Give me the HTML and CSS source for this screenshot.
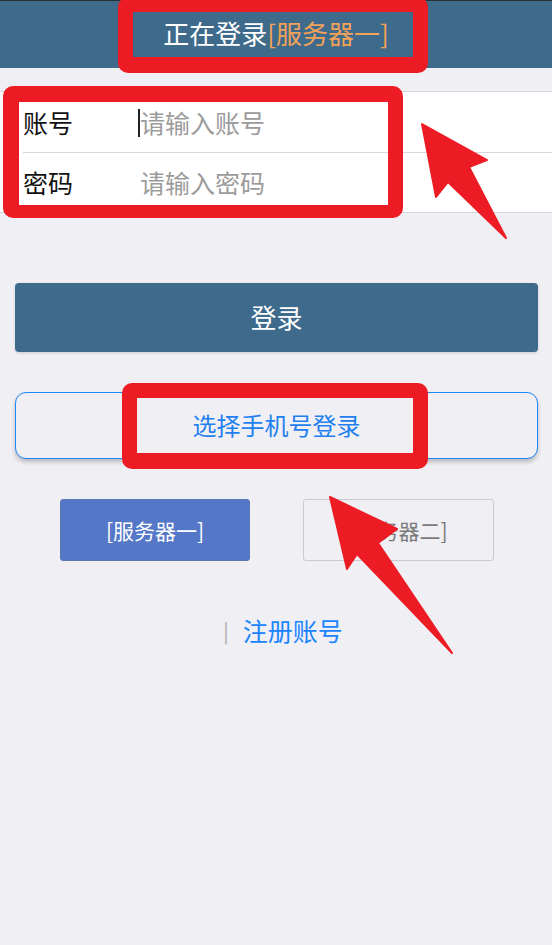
FILE: index.html
```html
<!DOCTYPE html>
<html lang="zh-CN">
<head>
<meta charset="utf-8">
<title>登录</title>
<link rel="stylesheet" href="styles.css">
</head>
<body>
<div class="page">
  <header class="topbar">
    <h1 class="title">正在登录<span class="server-name">[服务器一]</span></h1>
  </header>

  <section class="form">
    <div class="row">
      <span class="label">账号</span>
      <span class="field"><span class="caret"></span><span class="placeholder">请输入账号</span></span>
    </div>
    <div class="row row-divided">
      <span class="label">密码</span>
      <span class="field"><span class="placeholder">请输入密码</span></span>
    </div>
  </section>

  <button class="btn-login">登录</button>
  <button class="btn-phone">选择手机号登录</button>

  <div class="servers">
    <button class="server server-active">[服务器一]</button>
    <button class="server">[服务器二]</button>
  </div>

  <div class="links">
    <span class="sep">|</span><a class="register">注册账号</a>
  </div>

  <div class="annotations">
    <div class="mark mark-title"></div>
    <div class="mark mark-form"></div>
    <div class="mark mark-phone"></div>
    <svg class="arrows" width="552" height="945" viewBox="0 0 552 945">
      <polygon points="422,124 487,160 469,167 506,238 448,182 436,197"/>
      <polygon points="330,497 397,529 378,543 452,653 357,554 347,569"/>
    </svg>
  </div>
</div>
</body>
</html>
```
FILE: styles.css
```css
* { box-sizing: border-box; }

html, body {
  margin: 0;
  padding: 0;
}

body {
  background: #efeff4;
  font-family: "Noto Sans CJK SC", "Noto Sans", sans-serif;
}

.page {
  position: relative;
  width: 552px;
  height: 945px;
  overflow: hidden;
  background: #efeff4;
}

.topbar {
  height: 68px;
  background: #3e6a8c;
  border-top: 1px solid #2a2f35;
  display: flex;
  align-items: center;
  justify-content: center;
}

.title {
  margin: 0;
  font-size: 26px;
  font-weight: normal;
  color: #ffffff;
  line-height: 1;
  padding-bottom: 4px;
}

.server-name { color: #f3a257; }

.form {
  margin-top: 23px;
  background: #ffffff;
  border-top: 1px solid #d6d6da;
  border-bottom: 1px solid #d6d6da;
}

.row {
  margin-left: 23px;
  height: 60px;
  display: flex;
  align-items: center;
}

.row-divided { border-top: 1px solid #d8d8dc; }

.label {
  width: 117px;
  font-size: 25px;
  color: #111111;
  line-height: 1;
}

.field {
  position: relative;
  display: flex;
  align-items: center;
  font-size: 25px;
  line-height: 1;
}

.placeholder { color: #9b9b9b; }

.caret {
  position: absolute;
  left: -2px;
  top: -1px;
  width: 2px;
  height: 28px;
  background: #222;
}

button {
  font-family: inherit;
  border: 0;
  padding: 0;
  cursor: pointer;
}

.btn-login {
  display: block;
  margin: 70px 14px 0 15px;
  width: 523px;
  height: 69px;
  border-radius: 4px;
  background: #3e6a8c;
  color: #ffffff;
  font-size: 26px;
  padding-bottom: 3px;
  box-shadow: 0 1px 3px rgba(0, 0, 0, 0.15);
}

.btn-phone {
  display: block;
  margin: 40px 14px 0 15px;
  width: 523px;
  height: 67px;
  border-radius: 11px;
  background: #efeff4;
  border: 1.5px solid #1f86f5;
  color: #1f7ff0;
  font-size: 24px;
  padding-bottom: 3px;
  box-shadow: 0 3px 4px rgba(0, 0, 0, 0.22);
}

.servers {
  margin-top: 40px;
  display: flex;
  gap: 53px;
  padding-left: 60px;
}

.server {
  width: 191px;
  height: 62px;
  border-radius: 3px;
  background: #efeff4;
  border: 1.5px solid #cbcbcf;
  color: #7a7a7a;
  font-size: 21px;
}

.server-active {
  width: 190px;
  background: #5577c8;
  border-color: #5a76b8;
  color: #ffffff;
}

.links {
  margin-top: 57px;
  display: flex;
  justify-content: center;
  align-items: center;
  padding-left: 14px;
  font-size: 25px;
  line-height: 1;
}

.sep {
  color: #a8a8a8;
  font-size: 20px;
  margin-right: 14px;
}

.register { color: #1a84ff; }

.annotations {
  position: absolute;
  inset: 0;
  pointer-events: none;
}

.mark {
  position: absolute;
  border: 15px solid #ed1c24;
  border-radius: 10px;
}

.mark-title {
  left: 118px;
  top: -3px;
  width: 310px;
  height: 76px;
  border-bottom-width: 16px;
}

.mark-form {
  left: 3px;
  top: 86px;
  width: 400px;
  height: 132px;
  border-width: 16px 15px 13px 16px;
}

.mark-phone {
  left: 122px;
  top: 383px;
  width: 306px;
  height: 86px;
  border-bottom-width: 16px;
}

.arrows {
  position: absolute;
  left: 0;
  top: 0;
}

.arrows polygon {
  fill: #ed1c24;
  stroke: #ed1c24;
  stroke-width: 2;
  stroke-linejoin: round;
}
```
